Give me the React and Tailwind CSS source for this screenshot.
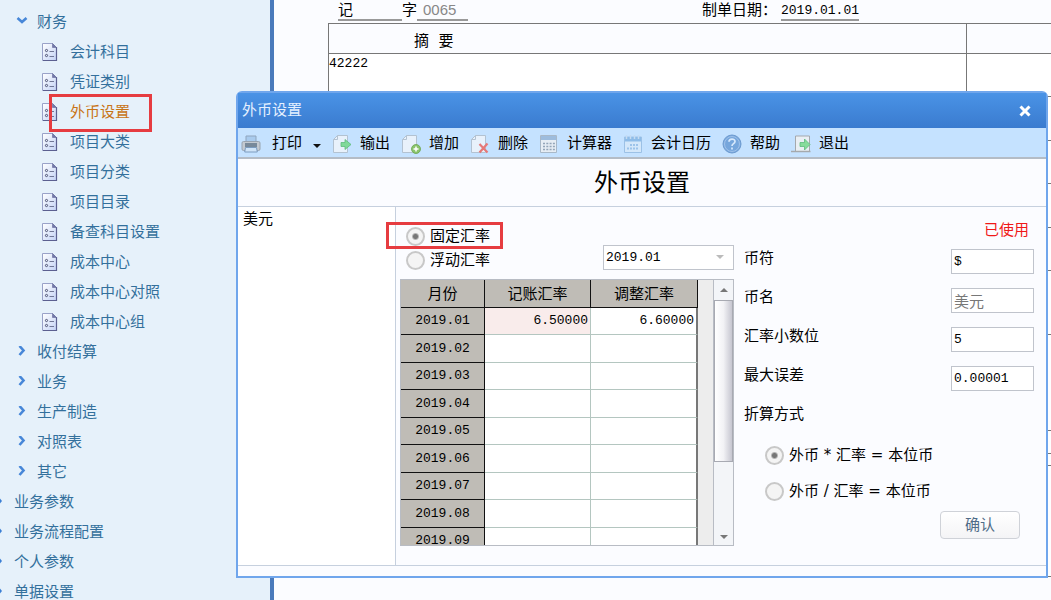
import { useState } from 'react'

const financeItems = [
  '会计科目',
  '凭证类别',
  '外币设置',
  '项目大类',
  '项目分类',
  '项目目录',
  '备查科目设置',
  '成本中心',
  '成本中心对照',
  '成本中心组',
]

const subGroups = ['收付结算', '业务', '生产制造', '对照表', '其它']

const topGroups = ['业务参数', '业务流程配置', '个人参数', '单据设置']

// empty voucher lines below the first one
const voucherRows = [
  'h-[44px]',
  'h-[43px]',
  'h-[44px]',
  'h-[43px]',
  'h-[64px]',
  'h-[96px]',
  'h-[23px]',
  'h-[12px]',
  'h-[111px]',
]

const rates = [
  { month: '2019.01', book: '6.50000', adjust: '6.60000' },
  { month: '2019.02' },
  { month: '2019.03' },
  { month: '2019.04' },
  { month: '2019.05' },
  { month: '2019.06' },
  { month: '2019.07' },
  { month: '2019.08' },
  { month: '2019.09' },
]

const fields = [
  { id: 'symbol', label: '币符', value: '$' },
  { id: 'name', label: '币名', value: '美元', muted: true },
  { id: 'decimals', label: '汇率小数位', value: '5' },
  { id: 'tolerance', label: '最大误差', value: '0.00001' },
]

function DocIcon() {
  return (
    <svg className="w-4 h-5 shrink-0" viewBox="0 0 16 20" fill="none">
      <defs>
        <linearGradient id="doc" x1="0" y1="0" x2="1" y2="1">
          <stop offset="0" stopColor="#ffffff" />
          <stop offset="1" stopColor="#c3d2f5" />
        </linearGradient>
      </defs>
      <path d="M.5 1.5h10l4 4v13H.5z" fill="url(#doc)" stroke="#9aa2c8" />
      <path d="M14.5 5v13.5H1" stroke="#5c6090" strokeWidth="1.2" />
      <path d="M10.5 1.5v4h4z" fill="#7479a8" stroke="#666b9c" strokeWidth=".6" />
      <circle cx="4.5" cy="8.5" r="1.1" stroke="#4a4f70" />
      <circle cx="4.5" cy="13.5" r="1.1" stroke="#4a4f70" />
      <path d="M7.5 9.5H12M7.5 14.5H12" stroke="#707796" />
    </svg>
  )
}

function Chevron({ open }) {
  return (
    <svg className="w-3 h-3 shrink-0" viewBox="0 0 12 12" fill="none" stroke="#4787d8" strokeWidth="2.6">
      {open ? <path d="M1.5 2l4.5 4 4.5-4" /> : <path d="M3.5 0l4 4.5-4 4.5" />}
    </svg>
  )
}

function Sidebar() {
  return (
    <nav className="w-[270px] shrink-0 bg-[#e6f1fa] pt-[7px] text-[#33709c] overflow-hidden">
      <a href="#finance" className="flex items-center h-[30px] pl-4 gap-[9px]">
        <Chevron open />
        财务
      </a>
      {financeItems.map(item => (
        <a key={item} href={`#${item}`} className="relative flex items-center h-[30px] pl-[42px] gap-3">
          <DocIcon />
          <span className={item === '外币设置' ? 'text-[#c87416]' : ''}>{item}</span>
          {item === '外币设置' && (
            <span className="absolute left-[49px] -top-[3px] w-[103px] h-[38px] border-3 border-[#e63c40]" />
          )}
        </a>
      ))}
      {subGroups.map(item => (
        <a key={item} href={`#${item}`} className="flex items-center h-[30px] pl-4 gap-[9px]">
          <Chevron />
          {item}
        </a>
      ))}
      {topGroups.map(item => (
        <a key={item} href={`#${item}`} className="flex items-center h-[30px] gap-3">
          <svg className="w-0.5 h-2 shrink-0" viewBox="0 0 2 8">
            <path d="M0 .5L2 3 0 5.5z" fill="#3b7fd4" />
          </svg>
          {item}
        </a>
      ))}
    </nav>
  )
}

function Voucher() {
  return (
    <main className="flex-1 min-w-0 overflow-hidden border-l-4 border-[#4a7abb] bg-[#fbfcff] text-black">
      <div className="flex h-[23px] pl-[64px] leading-[21px]">
        <span className="w-[64px] h-[21px] border-b-2 border-[#999]">记</span>
        <label htmlFor="voucher-no">字</label>
        <input
          id="voucher-no"
          defaultValue="0065"
          className="w-[51px] h-[21px] pl-1.5 border-b-2 border-[#999] font-['Liberation_Sans'] text-[#888]"
        />
        <label htmlFor="voucher-date" className="ml-auto">制单日期：</label>
        <input
          id="voucher-date"
          defaultValue="2019.01.01"
          className="w-[78px] h-[21px] ml-1 mr-48 pt-0.5 border-b-2 border-[#999] font-['Liberation_Mono'] text-[13px]"
        />
      </div>
      <div className="pl-[54px] -mr-0.5">
        <table className="w-full table-fixed border-collapse border-l border-t border-[#777]">
          <thead>
            <tr className="h-[30px]">
              <th className="w-[638px] border border-[#777] pt-1.5 pl-[85px] text-left font-normal">摘&nbsp;&nbsp;要</th>
              <th className="border border-[#777]" />
            </tr>
          </thead>
          <tbody className="bg-white">
            <tr className="h-[43px] align-top">
              <td className="border border-[#777] font-['Liberation_Mono'] text-[13px]">42222</td>
              <td className="border border-[#777]" />
            </tr>
            {voucherRows.map((height, i) => (
              <tr key={i} className={height}>
                <td className="border border-[#777]" />
                <td className="border border-[#777]" />
              </tr>
            ))}
          </tbody>
        </table>
      </div>
    </main>
  )
}

function PrintIcon() {
  return (
    <svg className="w-5 h-5" viewBox="0 0 20 20">
      <path d="M5 2h10v6H5z" fill="#a9cbee" stroke="#8fa5bd" />
      <rect x="1" y="7.5" width="18" height="9" rx="1.5" fill="#c3c9d0" stroke="#98a3b0" />
      <path d="M4 9h12v4H4z" fill="#78899a" />
      <path d="M4.5 13.5h11l.8 4.5H3.7z" fill="#cfe4f8" stroke="#7c9cc0" />
    </svg>
  )
}

function PageIcon({ children }) {
  return (
    <svg className="w-5 h-5" viewBox="0 0 20 20" fill="none">
      <path d="M5.5 1.5h10v17h-14v-13z" fill="#e8f1fb" stroke="#b3c2d1" />
      <path d="M5.5 1.5v4h-4" stroke="#b3c2d1" />
      {children}
    </svg>
  )
}

function ExportIcon() {
  return (
    <PageIcon>
      <path d="M9 8.5h4v-3l6 5-6 5v-3H9z" fill="#7fd998" stroke="#5dbb7c" strokeWidth=".8" />
    </PageIcon>
  )
}

function AddIcon() {
  return (
    <PageIcon>
      <circle cx="15" cy="15" r="4.5" fill="#8bc46c" stroke="#6ba550" strokeWidth=".8" />
      <path d="M15 12.500v5M12.500 15h5" stroke="#fff" strokeWidth="1.5" />
    </PageIcon>
  )
}

function DeleteIcon() {
  return (
    <PageIcon>
      <path d="M9.500 10l8 8.500M17.500 9.500l-8 9" stroke="#e57878" strokeWidth="2.2" />
    </PageIcon>
  )
}

function CalculatorIcon() {
  return (
    <svg className="w-5 h-5" viewBox="0 0 20 20" fill="none">
      <path d="M1.5 1.5h16v17h-16z" fill="#e6edf4" stroke="#a8b8c8" />
      <path d="M2 2h15v4H2z" fill="#9dbcdd" />
      <path d="M4 9.500h12M4 12.500h12M4 15.500h12" stroke="#93a5b8" strokeWidth="1.5" strokeDasharray="2 1.3" />
    </svg>
  )
}

function CalendarIcon() {
  return (
    <svg className="w-5 h-5" viewBox="0 0 20 20" fill="none">
      <path d="M1.5 3h17v15.500h-17z" fill="#d3e7fa" stroke="#9cc1e6" />
      <path d="M2 3h16v4.500H2z" fill="#8ebce8" />
      <path d="M3.500 1v4M7.500 1v4M11.500 1v4M15.500 1v4" stroke="#c4dbf2" strokeWidth="1.5" />
      <path d="M7 11h9M4 14.500h12" stroke="#9cc3ea" strokeWidth="2" strokeDasharray="2 1" />
    </svg>
  )
}

function HelpIcon() {
  return (
    <svg className="w-5 h-5" viewBox="0 0 20 20" fill="none">
      <circle cx="10" cy="10" r="9" fill="#76a6dc" stroke="#6e9bd0" />
      <circle cx="10" cy="10" r="7.5" stroke="#a9c8ec" strokeWidth=".8" />
      <path d="M7 7.800c0-3.600 6-3.600 6-.3 0 2.200-3 2.200-3 4.500M10 13.500v2" stroke="#d8e9fc" strokeWidth="1.7" />
    </svg>
  )
}

function ExitIcon() {
  return (
    <svg className="w-5 h-5" viewBox="0 0 20 20" fill="none">
      <path d="M4.500 17V2h14v15" fill="#e9eff4" stroke="#a5a9ad" />
      <path d="M0 17.500h19.500" stroke="#a5a9ad" strokeWidth="1.5" />
      <path d="M9 8.500h4.500V5l5.500 5.500-5.500 5.500v-3.500H9z" fill="#86dc9b" stroke="#5dbb7c" strokeWidth=".8" />
    </svg>
  )
}

const tools = [
  { label: '输出', Icon: ExportIcon },
  { label: '增加', Icon: AddIcon },
  { label: '删除', Icon: DeleteIcon },
  { label: '计算器', Icon: CalculatorIcon },
  { label: '会计日历', Icon: CalendarIcon },
  { label: '帮助', Icon: HelpIcon },
  { label: '退出', Icon: ExitIcon },
]

function Toolbar() {
  return (
    <div className="flex items-center h-[31px] pt-0.5 pl-[3px] gap-[11px] bg-[#c5e2ff] border-b-2 border-[#b4bcc6] overflow-hidden whitespace-nowrap">
      <button className="flex items-center gap-[11px]">
        <PrintIcon />
        打印
        <svg className="w-2 h-1 mt-1" viewBox="0 0 8 4">
          <path d="M0 0h8L4 4z" fill="#111" />
        </svg>
      </button>
      {tools.map(({ label, Icon }) => (
        <button key={label} className="flex items-center gap-2">
          <Icon />
          {label}
        </button>
      ))}
    </div>
  )
}

function Radio({ name, label, checked, onChange }) {
  return (
    <label className="flex items-center gap-[5px] whitespace-nowrap">
      <input
        type="radio"
        name={name}
        checked={checked}
        onChange={onChange}
        className="appearance-none w-[19px] h-[19px] shrink-0 rounded-full border-2 border-[#c8c8c8] bg-[#f4f4f4] checked:bg-[radial-gradient(circle,#777_2px,#f4f4f4_4px)]"
      />
      {label}
    </label>
  )
}

function RateGrid() {
  return (
    <div className="flex h-[267px] border border-[#b8bcc4] bg-[#ededed]">
      <div className="flex-1 overflow-hidden">
        <table className="w-[297px] table-fixed border-separate border-spacing-0 bg-white leading-5">
          <thead className="bg-[#bfbcb6]">
            <tr className="h-7">
              <th className="w-[84px] border-r border-b border-[#111] font-normal">月份</th>
              <th className="w-[106px] border-r border-b border-[#111] font-normal">记账汇率</th>
              <th className="border-r border-b border-[#111] font-normal">调整汇率</th>
            </tr>
          </thead>
          <tbody className="font-['Liberation_Mono'] text-[13px]">
            {rates.map(row => (
              <tr key={row.month} className="h-[27px] even:h-7">
                <th className="border-r border-b border-[#111] bg-[#bfbcb6] font-normal">{row.month}</th>
                <td className={`border-r border-b border-[#b4c6c0] pr-0.5 text-right ${row.book ? 'bg-[#f9eceb]' : ''}`}>
                  {row.book}
                </td>
                <td className="border-b border-b-[#b4c6c0] border-r-2 border-r-[#777] pr-0.5 text-right">{row.adjust}</td>
              </tr>
            ))}
          </tbody>
        </table>
      </div>
      <div className="flex flex-col w-5 border-l border-[#b8bcc4] bg-[#f3f5f8]">
        <button aria-label="向上" className="flex items-center justify-center h-5">
          <svg className="w-2 h-1" viewBox="0 0 8 4">
            <path d="M0 4h8L4 0z" fill="#777" />
          </svg>
        </button>
        <div className="flex-1">
          <div className="h-[162px] border border-[#a8aab2] bg-linear-to-r from-white via-[#f2f2f5] to-[#c6c6d0]" />
        </div>
        <button aria-label="向下" className="flex items-center justify-center h-4">
          <svg className="w-2 h-1" viewBox="0 0 8 4">
            <path d="M0 0h8L4 4z" fill="#777" />
          </svg>
        </button>
      </div>
    </div>
  )
}

function CurrencyDialog() {
  const [mode, setMode] = useState('fixed')
  const [formula, setFormula] = useState('multiply')

  return (
    <section className="absolute left-[236px] right-[3px] top-[91px] border-2 border-[#70a6ec] rounded-t-md bg-[#fbfcff] text-black">
      <header className="flex items-center justify-between h-[35px] pl-1 pr-[15px] bg-linear-to-b from-[#4a93e6] to-[#3a7bcf] text-[#e4f0ff]">
        <h2>外币设置</h2>
        <button aria-label="关闭">
          <svg className="w-3 h-3" viewBox="0 0 12 12" stroke="#fff" strokeWidth="3">
            <path d="M1.500 1.500l9 9M10.500 1.500l-9 9" />
          </svg>
        </button>
      </header>
      <Toolbar />
      <h1 className="h-[47px] pt-0.5 text-center text-2xl leading-[44px]">外币设置</h1>

      <div className="flex border-y border-[#c6d0de]">
        <ul className="w-[158px] shrink-0 border-r border-[#c6d0de] bg-white pl-[5px]">
          <li className="leading-6">美元</li>
        </ul>

        <div className="w-[334px] shrink-0 ml-1 pt-5 pb-[19px]">
          <div className="flex items-end justify-between pb-[9px]">
            <div className="relative flex flex-col gap-[5px] pl-1.5">
              <Radio name="mode" label="固定汇率" checked={mode === 'fixed'} onChange={() => setMode('fixed')} />
              <Radio name="mode" label="浮动汇率" checked={mode === 'float'} onChange={() => setMode('float')} />
              <span className="absolute -left-3.5 -top-[5px] w-[117px] h-[27px] border-3 border-[#e63c40] pointer-events-none" />
            </div>
            <div className="relative w-[131px]">
              <select
                aria-label="会计期间"
                className="appearance-none block w-full h-[25px] pl-0.5 border border-[#c0c4cc] bg-white font-['Liberation_Mono'] text-[13px]"
              >
                <option>2019.01</option>
              </select>
              <svg className="absolute right-2.5 top-2.5 w-2 h-1 pointer-events-none" viewBox="0 0 8 4">
                <path d="M0 0h8L4 4z" fill="#bbb" />
              </svg>
            </div>
          </div>
          <RateGrid />
        </div>

        <form className="flex-1 pl-2.5 pr-3 pt-[11px]" onSubmit={e => e.preventDefault()}>
          <p className="h-[31px] pr-[5px] text-right leading-6 text-[#f01818]">已使用</p>
          {fields.map(field => (
            <div key={field.id} className="flex justify-between h-[39px] leading-[18px]">
              <label htmlFor={field.id}>{field.label}</label>
              <input
                id={field.id}
                defaultValue={field.value}
                className={`w-[83px] h-[25px] px-0.5 border border-[#c0c4cc] bg-white font-['Liberation_Mono','Noto_Sans_CJK_SC'] ${
                  field.muted ? 'text-[15px] text-[#777]' : 'text-[13px]'
                }`}
              />
            </div>
          ))}
          <fieldset className="flex flex-col">
            <legend className="h-[41px] leading-[18px]">折算方式</legend>
            <div className="flex flex-col gap-[17px] pl-[21px]">
              <Radio
                name="formula"
                label="外币 * 汇率 = 本位币"
                checked={formula === 'multiply'}
                onChange={() => setFormula('multiply')}
              />
              <Radio
                name="formula"
                label="外币 / 汇率 = 本位币"
                checked={formula === 'divide'}
                onChange={() => setFormula('divide')}
              />
            </div>
          </fieldset>
          <button className="block w-20 h-7 ml-auto mr-3.5 mt-2.5 rounded-sm border border-[#cfd2d8] bg-linear-to-b from-white to-[#f4f4f6] text-[#4f6c88]">
            确认
          </button>
        </form>
      </div>
      <div className="h-2.5" />
    </section>
  )
}

export default function App() {
  return (
    <div className="relative flex h-screen min-h-[600px] overflow-hidden font-['DejaVu_Sans','Noto_Sans_CJK_SC',sans-serif] text-[15px] leading-[19px]">
      <Sidebar />
      <Voucher />
      <CurrencyDialog />
    </div>
  )
}
